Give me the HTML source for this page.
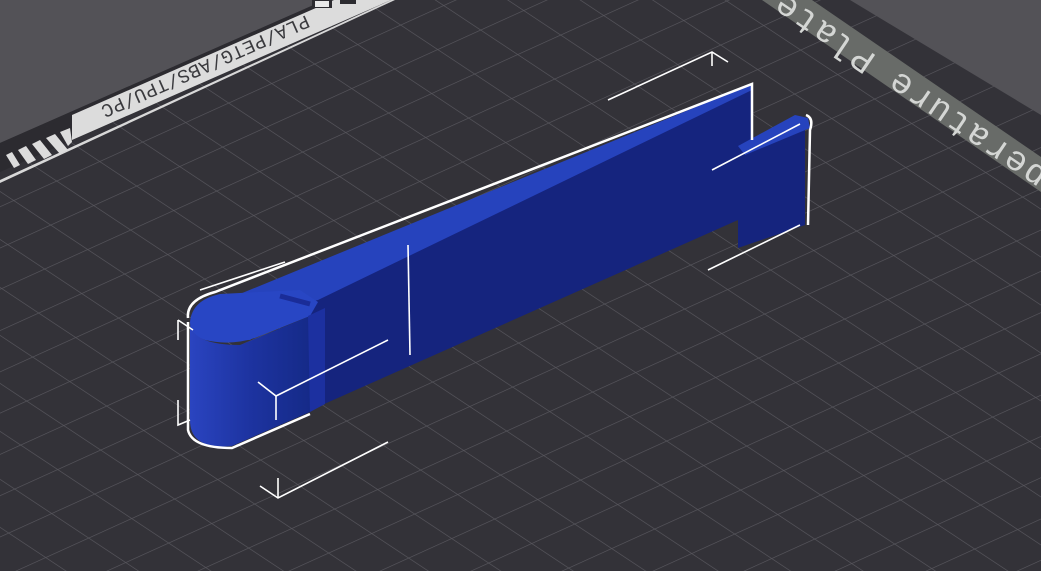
<!DOCTYPE html>
<html><head><style>
html,body{margin:0;padding:0;background:#333238;overflow:hidden}
svg{display:block}
</style></head><body>
<svg width="1041" height="571" viewBox="0 0 1041 571" xmlns="http://www.w3.org/2000/svg">
<defs>
<pattern id="g" width="10" height="10" patternUnits="userSpaceOnUse" patternTransform="matrix(4.3 -1.95 3.7 2.45 0 0)">
<rect width="10" height="10" fill="#333238"/>
<path d="M0 0H10M0 0V10" stroke="#58575e" stroke-width="0.32" fill="none"/>
</pattern>
<linearGradient id="cyl" x1="0" x2="1" y1="0" y2="0">
<stop offset="0" stop-color="#2a44c0"/><stop offset="0.5" stop-color="#1d33a0"/><stop offset="1" stop-color="#152a88"/>
</linearGradient>
</defs>
<rect width="1041" height="571" fill="url(#g)"/>
<polygon points="0,0 325,0 0,143" fill="#535257"/>
<polygon points="0,143 325,0 334,0 0,147" fill="#2c2b30"/>
<polygon points="0,147 334,0 391,0 0,172" fill="#2c2b30"/>
<polygon points="72,115 334,0 391,0 72,140" fill="#dcdcdc"/>
<polygon points="0,180 391,0 395,0 0,183" fill="#d8d8d8"/>
<g fill="#dcdcdc">
<polygon points="6,155 12,152 20,165 14,168"/>
<polygon points="18,150 26,146 36,160 28,164"/>
<polygon points="32,144 40,140 52,155 44,159"/>
<polygon points="46,138 55,134 68,150 60,154"/>
<polygon points="60,132 70,128 72,142 68,146"/>
</g>
<text transform="translate(306,15) rotate(156)" font-family="Liberation Mono, monospace" font-size="19" fill="#3a3a3e" letter-spacing="0.5">PLA/PETG/ABS/TPU/PC</text>
<rect x="312" y="0" width="20" height="8" fill="#2c2b30"/>
<rect x="315" y="1" width="14" height="6" fill="#e8e8e8"/>
<rect x="340" y="0" width="16" height="4" fill="#2c2b30"/>
<polygon points="850,0 1041,0 1041,115" fill="#535257"/>
<polygon points="762,0 812,0 1041,157 1041,192" fill="#686b68"/>
<text transform="translate(782,-8) rotate(214)" text-anchor="end" font-family="Liberation Mono, monospace" font-size="35" fill="#d4d6d4" letter-spacing="2">Temperature Plate</text>
<polygon points="305,302 752,86 752,142 738,150 738,220 322,405" fill="#15247e"/>
<polygon points="196,312 752,84 752,90 318,300 300,304 250,340 200,338" fill="#2643bd"/>
<path d="M190,322 Q192,300 220,294 L300,290 L318,302 L310,316 L255,338 Q230,346 205,340 Q190,335 190,322 Z" fill="#2846c4"/>
<path d="M190,325 Q195,345 240,345 L310,316 L310,412 L232,446 Q190,450 190,420 Z" fill="url(#cyl)"/>
<polygon points="308,316 325,308 325,404 310,412" fill="#1c30a0"/>
<polygon points="738,150 805,118 805,225 738,248" fill="#15247e"/>
<polygon points="738,146 795,115 808,118 810,128 745,155" fill="#2643bd"/>
<g stroke="#fff" fill="none" stroke-width="2.5">
<path d="M188,318 Q186,300 215,292 L752,84 L752,140"/>
<path d="M188,322 L188,430 Q192,448 232,448 L310,414"/>
<path d="M806,115 Q814,118 810,130 L808,225"/>
</g>
<g stroke="#fff" fill="none" stroke-width="1.6">
<path d="M608,100 L712,52 L728,62"/><path d="M712,52 L712,66"/>
<path d="M712,170 L800,124"/>
<path d="M708,270 L800,225"/>
<path d="M258,382 L276,396 L388,340"/><path d="M276,396 L276,420"/>
<path d="M260,486 L278,498 L388,442"/><path d="M278,498 L278,478"/>
<path d="M178,320 L193,330 M178,320 L178,340 M200,290 L285,262"/>
<path d="M178,400 L178,425 L190,420"/>
<path d="M408,245 L410,355"/>
<path d="M280,296 L310,304" stroke="#1a2c98" stroke-width="5"/>
</g>
</svg>
</body></html>
